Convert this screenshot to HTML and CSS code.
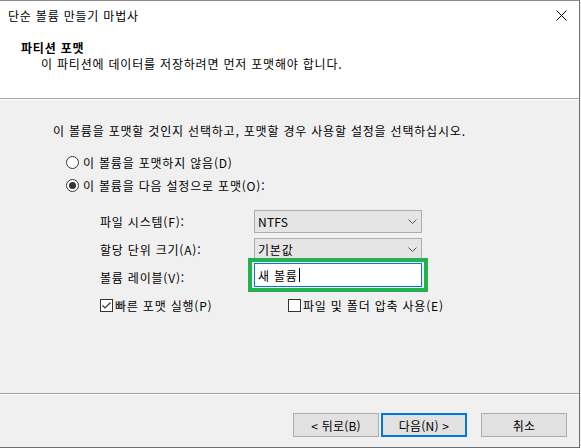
FILE: index.html
```html
<!DOCTYPE html>
<html lang="ko">
<head>
<meta charset="utf-8">
<link rel="stylesheet" href="styles.css">
</head>
<body>
<div class="window">
  <div class="titlebar">
    <span class="title">단순 볼륨 만들기 마법사</span>
    <svg class="close" width="11" height="11" viewBox="0 0 11 11"><path d="M0.5 0.5 L10.5 10.5 M10.5 0.5 L0.5 10.5" stroke="#000" stroke-width="1"/></svg>
  </div>
  <div class="header">
    <div class="h-title">파티션 포맷</div>
    <div class="h-sub">이 파티션에 데이터를 저장하려면 먼저 포맷해야 합니다.</div>
  </div>
  <div class="body">
    <p class="intro">이 볼륨을 포맷할 것인지 선택하고, 포맷할 경우 사용할 설정을 선택하십시오.</p>
    <label class="radio r1"><span class="rb"></span>이 볼륨을 포맷하지 않음(D)</label>
    <label class="radio"><span class="rb on"></span>이 볼륨을 다음 설정으로 포맷(O):</label>
    <div class="settings">
      <div class="row"><span class="lbl">파일 시스템(F):</span><div class="combo"><span class="latin">NTFS</span><svg class="chev" width="9" height="5" viewBox="0 0 9 5"><path d="M0.5 0.5 L4.5 4.5 L8.5 0.5" fill="none" stroke="#555" stroke-width="1"/></svg></div></div>
      <div class="row"><span class="lbl">할당 단위 크기(A):</span><div class="combo"><span>기본값</span><svg class="chev" width="9" height="5" viewBox="0 0 9 5"><path d="M0.5 0.5 L4.5 4.5 L8.5 0.5" fill="none" stroke="#555" stroke-width="1"/></svg></div></div>
      <div class="row"><span class="lbl">볼륨 레이블(V):</span><div class="hl"><div class="input">새 볼륨<span class="caret"></span></div></div></div>
      <div class="checks">
        <label class="check c1"><span class="cb"><svg width="11" height="11" viewBox="0 0 11 11"><path d="M1.5 5.5 L4 8 L9.5 2.5" fill="none" stroke="#333" stroke-width="1.2"/></svg></span>빠른 포맷 실행(P)</label>
        <label class="check"><span class="cb"></span>파일 및 폴더 압축 사용(E)</label>
      </div>
    </div>
  </div>
  <div class="footer">
    <button class="btn">&lt; 뒤로(B)</button>
    <button class="btn def">다음(N) &gt;</button>
    <button class="btn cancel">취소</button>
  </div>
</div>
</body>
</html>
```
FILE: styles.css
```css
* { box-sizing: border-box; }
html, body { margin: 0; padding: 0; }
body {
  width: 581px; height: 448px; overflow: hidden;
  background: #f0f0f0;
  font-family: "Noto Sans CJK KR", "Noto Sans", sans-serif;
  font-size: 12px; color: #000;
  letter-spacing: 0.8px;
}
.window {
  width: 580px; height: 448px;
  border-right: 1px solid #6e6e6e;
  border-bottom: 1px solid #6e6e6e;
  border-top: 1px solid #8a8a8a;
  background: #f0f0f0;
  display: flex; flex-direction: column;
}
.titlebar {
  background: #fff; height: 30px; flex: none;
  display: flex; align-items: center; justify-content: space-between;
  padding: 0 12px 0 8px;
}
.title { line-height: 16px; }
.close { margin-top: -1px; }
.header {
  background: #fff; height: 68px; flex: none;
  border-bottom: 1px solid #a0a0a0;
  padding: 9px 0 0 21px;
}
.h-title { font-weight: bold; line-height: 16px; }
.h-sub { padding-left: 20px; line-height: 16px; }
.body {
  flex: 1;
  border-top: 1px solid #fff;
  border-bottom: 1px solid #a0a0a0;
  padding: 22px 0 0 53px;
}
.intro { margin: 0 0 15px; line-height: 17px; }
.radio { display: flex; align-items: center; height: 17px; margin-left: 13px; }
.radio.r1 { margin-bottom: 6px; }
.rb {
  width: 13px; height: 13px; border-radius: 50%; flex: none;
  border: 1px solid #333; background: #fff; margin-right: 4px; position: relative;
}
.rb.on::after {
  content: ""; position: absolute; left: 2px; top: 2px; width: 7px; height: 7px;
  border-radius: 50%; background: #333;
}
.settings { padding: 16px 0 0 47px; }
.row { display: flex; align-items: flex-start; height: 28px; }
.lbl { width: 154px; line-height: 23px; flex: none; }
.combo {
  width: 168px; height: 23px; background: #e5e5e5; border: 1px solid #adadad;
  display: flex; align-items: center; justify-content: space-between; padding: 0 4px 0 3px;
  line-height: 20px;
}
.latin { letter-spacing: 0.2px; }
.hl { margin: -8px 0 0 -6px; border: 4px solid #22b14c; padding: 1px 2px; }
.input {
  width: 168px; height: 24px; background: #fff; border: 1px solid #0078d7;
  display: flex; align-items: center; padding-left: 3px;
}
.caret { display: inline-block; width: 1px; height: 14px; background: #000; margin-left: 1px; }
.checks { display: flex; margin-top: 3px; height: 17px; align-items: center; }
.check { display: flex; align-items: center; }
.check.c1 { width: 188px; }
.cb {
  width: 13px; height: 13px; border: 1px solid #333; background: #fff; margin-right: 2px; flex: none;
  display: flex; align-items: center; justify-content: center;
}
.footer {
  height: 53px; flex: none; border-top: 1px solid #fff;
  display: flex; align-items: flex-start; padding: 18px 0 0 293px;
}
.btn {
  font: inherit; letter-spacing: 0.2px; height: 24px; width: 86px; background: #e1e1e1;
  border: 1px solid #adadad; padding: 0; margin: 0 2px 0 0; color: #000;
}
.btn.def { border: 2px solid #0078d7; }
.btn.cancel { margin-left: 12px; }
```
